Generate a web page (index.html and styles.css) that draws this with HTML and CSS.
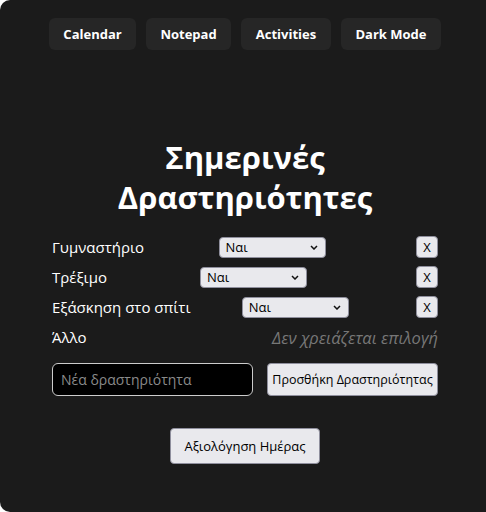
FILE: index.html
```html
<!DOCTYPE html>
<html lang="el">
<head>
<meta charset="utf-8">
<title>Σημερινές Δραστηριότητες</title>
<link rel="stylesheet" href="styles.css">
</head>
<body>
<div class="app">
  <nav class="nav">
    <button class="nav-btn nav-cal">Calendar</button>
    <button class="nav-btn nav-note">Notepad</button>
    <button class="nav-btn nav-act">Activities</button>
    <button class="nav-btn nav-dark">Dark Mode</button>
  </nav>

  <h1 class="title">Σημερινές<br>Δραστηριότητες</h1>

  <div class="list">
    <div class="row">
      <span class="label">Γυμναστήριο</span>
      <span class="select-wrap">
        <select class="sel"><option>Ναι</option><option>Όχι</option></select>
        <svg class="chev" width="8" height="5" viewBox="0 0 8 5"><path d="M1 1 L4 4 L7 1" fill="none" stroke="#111" stroke-width="1.5"/></svg>
      </span>
      <button class="del">X</button>
    </div>
    <div class="row">
      <span class="label">Τρέξιμο</span>
      <span class="select-wrap">
        <select class="sel"><option>Ναι</option><option>Όχι</option></select>
        <svg class="chev" width="8" height="5" viewBox="0 0 8 5"><path d="M1 1 L4 4 L7 1" fill="none" stroke="#111" stroke-width="1.5"/></svg>
      </span>
      <button class="del">X</button>
    </div>
    <div class="row">
      <span class="label">Εξάσκηση στο σπίτι</span>
      <span class="select-wrap">
        <select class="sel"><option>Ναι</option><option>Όχι</option></select>
        <svg class="chev" width="8" height="5" viewBox="0 0 8 5"><path d="M1 1 L4 4 L7 1" fill="none" stroke="#111" stroke-width="1.5"/></svg>
      </span>
      <button class="del">X</button>
    </div>
    <div class="row">
      <span class="label">Άλλο</span>
      <span class="note">Δεν χρειάζεται επιλογή</span>
    </div>
  </div>

  <div class="add">
    <input class="new-input" type="text" placeholder="Νέα δραστηριότητα">
    <button class="btn btn-add">Προσθήκη Δραστηριότητας</button>
  </div>

  <div class="eval">
    <button class="btn btn-eval">Αξιολόγηση Ημέρας</button>
  </div>
</div>
</body>
</html>
```

FILE: styles.css
```css
html, body {
  margin: 0;
  padding: 0;
  background: #ffffff;
  overflow: hidden;
}

.app {
  box-sizing: border-box;
  width: 100%;
  height: 512px;
  background: #1b1b1b;
  border-radius: 10px 0 0 10px;
  padding: 18px 0 0 4px;
  color: #ffffff;
  font-family: "Open Sans", "DejaVu Sans", sans-serif;
}

.nav {
  display: flex;
  justify-content: center;
  gap: 10px;
}

.nav-btn {
  height: 32px;
  padding: 0;
  border: none;
  border-radius: 6px;
  background: #262626;
  color: #ffffff;
  font-family: "Open Sans", sans-serif;
  font-weight: 700;
  font-size: 13px;
  white-space: nowrap;
}

.nav-cal { width: 87px; }
.nav-note { width: 85px; }
.nav-act { width: 90px; }
.nav-dark { width: 100px; }

.title {
  margin: 87px 0 15px;
  text-align: center;
  font-size: 31px;
  line-height: 40px;
  font-weight: 700;
}

.list {
  margin: 0 auto;
  width: 386px;
}

.row {
  display: flex;
  align-items: center;
  justify-content: space-between;
  height: 30px;
  font-size: 15px;
}

.label {
  color: #ffffff;
}

.select-wrap {
  position: relative;
  display: inline-flex;
}

.sel {
  appearance: none;
  -webkit-appearance: none;
  box-sizing: border-box;
  width: 107px;
  height: 21px;
  padding: 0 0 0 6px;
  margin: 0;
  border: 1px solid #8f8f9d;
  border-radius: 4px;
  background: #e9e9ed;
  color: #000000;
  font-family: "Open Sans", sans-serif;
  font-size: 13px;
}

.chev {
  position: absolute;
  right: 8px;
  top: 8px;
  pointer-events: none;
}

.del {
  box-sizing: border-box;
  width: 22px;
  height: 22px;
  margin: 0 0 0 16px;
  padding: 0;
  border: 1px solid #8f8f9d;
  border-radius: 4px;
  background: #e9e9ed;
  color: #000000;
  font-family: "Open Sans", sans-serif;
  font-size: 13px;
}

.note {
  color: #777777;
  font-style: italic;
  font-size: 16.5px;
}

.add {
  display: flex;
  justify-content: space-between;
  width: 386px;
  margin: 11px auto 0;
}

.new-input {
  box-sizing: border-box;
  width: 201px;
  height: 33px;
  padding: 0 8px;
  border: 1px solid #cccccc;
  border-radius: 6px;
  background: #000000;
  color: #ffffff;
  font-family: "Open Sans", sans-serif;
  font-size: 14px;
}

.new-input::placeholder {
  color: #8a8a8a;
}

.btn {
  box-sizing: border-box;
  height: 33px;
  padding: 0 4px;
  border: 1px solid #8f8f9d;
  border-radius: 4px;
  background: #e9e9ed;
  color: #000000;
  font-family: "Open Sans", sans-serif;
  font-size: 13px;
  white-space: nowrap;
}

.btn-add {
  width: 171px;
  padding: 0;
  font-size: 12.5px;
}

.eval {
  display: flex;
  justify-content: center;
  margin-top: 32px;
}

.btn-eval {
  width: 150px;
  height: 36px;
}
```
